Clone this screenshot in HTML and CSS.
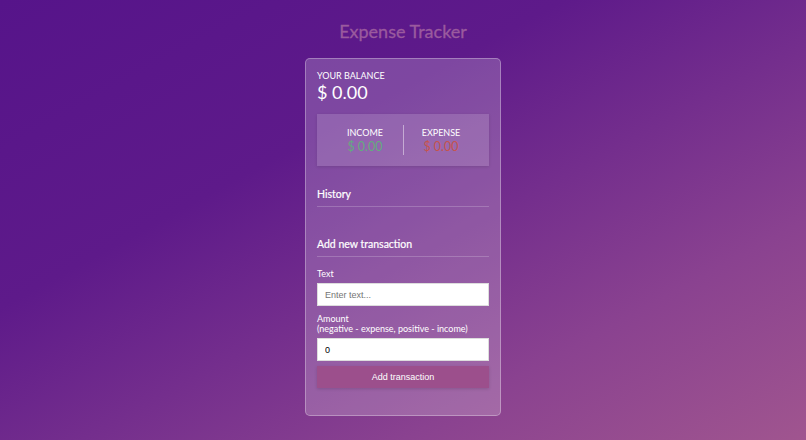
FILE: index.html
```html
<!DOCTYPE html>
<html>
<head>
<meta charset="utf-8">
<link rel="stylesheet" href="styles.css">
</head>
<body>
<h2 class="title">Expense Tracker</h2>
<div class="card">
  <div class="balance">
    <div class="label">YOUR BALANCE</div>
    <div class="amount">$ 0.00</div>
  </div>
  <div class="inc-exp">
    <div class="col">
      <div class="label">INCOME</div>
      <div class="money plus">$ 0.00</div>
    </div>
    <div class="divider"></div>
    <div class="col">
      <div class="label">EXPENSE</div>
      <div class="money minus">$ 0.00</div>
    </div>
  </div>
  <h3 class="section">History</h3>
  <ul class="list"></ul>
  <h3 class="section">Add new transaction</h3>
  <form class="form">
    <label class="flabel">Text</label>
    <input class="field" type="text" placeholder="Enter text...">
    <label class="flabel">Amount <br>(negative - expense, positive - income)</label>
    <input class="field" type="number" value="0">
    <button class="btn" type="button">Add transaction</button>
  </form>
</div>
</body>
</html>
```
FILE: styles.css
```css
* { box-sizing: border-box; }
html, body { height: 100%; }
body {
  margin: 0;
  font-family: Lato, "Open Sans", sans-serif;
  color: #fff;
  background: linear-gradient(to bottom right, #56148a 0%, #5e1a8a 35%, #8a4290 75%, #a0558f 100%);
  display: flex;
  flex-direction: column;
  align-items: center;
  overflow: hidden;
}
.title {
  margin: 20px 0 16px;
  font-size: 18px;
  font-weight: 400;
  color: #9a5a9e;
  line-height: 22px;
  -webkit-text-stroke: 0.3px #9a5a9e;
}
.card {
  width: 196px;
  padding: 11px 11px 27px;
  background: rgba(255,255,255,0.2);
  border: 1px solid rgba(255,255,255,0.3);
  border-radius: 5px;
}
.balance .label {
  font-size: 9px;
  line-height: 10px;
  margin-top: 1px;
}
.balance .amount {
  font-size: 18px;
  line-height: 22px;
  margin-bottom: 11px;
}
.inc-exp {
  display: flex;
  align-items: center;
  justify-content: center;
  height: 52px;
  background: rgba(255,255,255,0.15);
  box-shadow: 0 1px 3px rgba(0,0,0,0.12);
}
.inc-exp .col {
  width: 75px;
  text-align: center;
}
.inc-exp .label {
  font-size: 9px;
  line-height: 13px;
}
.divider {
  width: 1px;
  height: 30px;
  background: rgba(255,255,255,0.45);
}
.money {
  font-size: 12.5px;
  line-height: 15px;
}
.plus { color: #64aa80; }
.minus { color: #c6544c; }
.section {
  margin: 0;
  font-size: 10.5px;
  font-weight: 400;
  line-height: 15px;
  padding-bottom: 4px;
  border-bottom: 1px solid rgba(255,255,255,0.2);
  -webkit-text-stroke: 0.2px #fff;
}
.inc-exp + .section { margin-top: 21px; }
.list {
  margin: 0;
  padding: 0;
  height: 30px;
}
.form {
  display: flex;
  flex-direction: column;
}
.flabel {
  font-size: 9px;
  line-height: 10px;
  margin: 8px 0 4px;
}
.flabel:first-child { margin-top: 12px; }
.field {
  height: 23px;
  width: 100%;
  border: 1px solid #ddd;
  background: #fff;
  font-family: "Liberation Sans", Arial, sans-serif;
  font-size: 9px;
  padding: 0 7px;
  color: #000;
  outline: none;
}
.field::placeholder { color: #757575; }
.btn {
  margin-top: 5px;
  height: 22px;
  width: 100%;
  border: 0;
  background: #9c4f8c;
  color: #fff;
  font-family: "Liberation Sans", Arial, sans-serif;
  font-size: 9px;
  box-shadow: 0 1px 3px rgba(0,0,0,0.15);
}
```
